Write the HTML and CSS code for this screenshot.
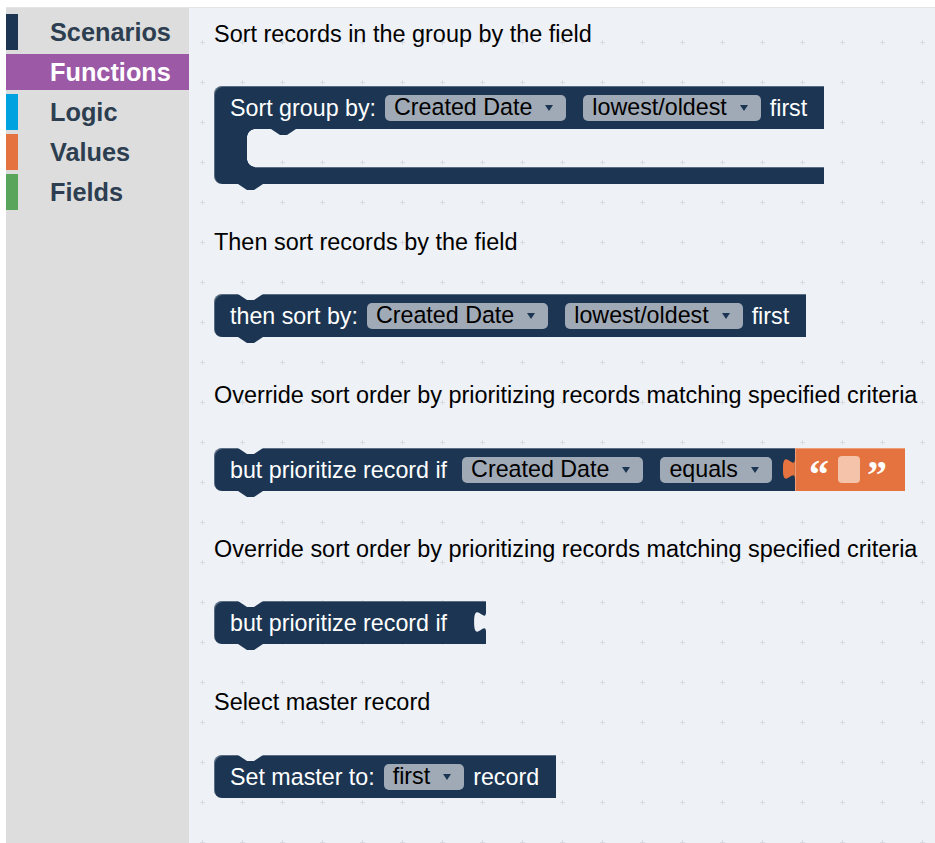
FILE: index.html
```html
<!DOCTYPE html>
<html lang="en">
<head>
<meta charset="utf-8">
<title>Blocks</title>
<link rel="stylesheet" href="styles.css">
</head>
<body>
<div class="app">
  <nav class="toolbox">
    <div class="cat"><span class="bar navy"></span><span class="name">Scenarios</span></div>
    <div class="cat selected"><span class="bar purple"></span><span class="name">Functions</span></div>
    <div class="cat"><span class="bar blue"></span><span class="name">Logic</span></div>
    <div class="cat"><span class="bar orange"></span><span class="name">Values</span></div>
    <div class="cat"><span class="bar green"></span><span class="name">Fields</span></div>
  </nav>
  <main class="ws">
    <svg class="grid" aria-hidden="true">
      <defs>
        <pattern id="dots" patternUnits="userSpaceOnUse" x="-7" y="14" width="40" height="40">
          <rect x="20" y="18" width="1" height="5" fill="#d7dce3"/>
          <rect x="18" y="20" width="5" height="1" fill="#d7dce3"/>
        </pattern>
      </defs>
      <rect width="100%" height="100%" fill="url(#dots)"/>
    </svg>
    <div class="flyout">
      <p class="label">Sort records in the group by the field</p>
      <div class="cblk">
        <div class="blk head">
          <span class="txt">Sort group by:</span>
          <span class="dd">Created Date<i class="arr"></i></span>
          <span class="dd">lowest/oldest<i class="arr"></i></span>
          <span class="txt">first</span>
          <span class="tab inner"></span>
        </div>
        <div class="cmid"><span class="arm"></span></div>
        <div class="cfoot"><span class="tab"></span></div>
      </div>

      <p class="label">Then sort records by the field</p>
      <div class="blk">
        <span class="notch"></span>
        <span class="txt">then sort by:</span>
        <span class="dd">Created Date<i class="arr"></i></span>
        <span class="dd">lowest/oldest<i class="arr"></i></span>
        <span class="txt">first</span>
        <span class="tab"></span>
      </div>

      <p class="label tall">Override sort order by prioritizing records matching specified criteria</p>
      <div class="row">
        <div class="blk withval">
          <span class="notch"></span>
          <span class="txt">but prioritize record if</span>
          <span class="dd wide">Created Date<i class="arr"></i></span>
          <span class="dd">equals<i class="arr"></i></span>
          <span class="tab"></span>
        </div>
        <div class="str">
          <span class="otab"></span>
          <span class="q">&#8220;</span>
          <span class="strbox"></span>
          <span class="q close">&#8221;</span>
        </div>
      </div>

      <p class="label">Override sort order by prioritizing records matching specified criteria</p>
      <div class="blk emptyval">
        <span class="notch"></span>
        <span class="txt">but prioritize record if</span>
        <span class="vcut"></span>
        <span class="tab"></span>
      </div>

      <p class="label tall">Select master record</p>
      <div class="blk">
        <span class="notch"></span>
        <span class="txt">Set master to:</span>
        <span class="dd">first<i class="arr"></i></span>
        <span class="txt">record</span>
      </div>
    </div>
  </main>
</div>
</body>
</html>
```

FILE: styles.css
```css
* { box-sizing: border-box; }

body {
  margin: 0;
  background: #ffffff;
  font-family: "Liberation Sans", Arial, sans-serif;
}

.app {
  display: flex;
  margin: 7px 0 0 6px;
  height: 836px;
  border-top: 1px solid #e3e5e8;
  overflow: hidden;
}

/* ---------- toolbox ---------- */
.toolbox {
  width: 183px;
  flex: none;
  background: #dddddd;
  padding-top: 6px;
  display: flex;
  flex-direction: column;
  gap: 4px;
}

.cat {
  display: flex;
  align-items: center;
  height: 36px;
}

.cat .bar {
  width: 12px;
  height: 100%;
}

.cat .name {
  margin-left: 32px;
  font-weight: bold;
  font-size: 25.3px;
  line-height: 36px;
  color: #2c3e50;
}

.cat.selected { background: #9b59a6; }
.cat.selected .name { color: #ffffff; }

.navy { background: #1b3552; }
.purple { background: #9b59a6; }
.blue { background: #00a2e0; }
.orange { background: #e4733f; }
.green { background: #59a55c; }

/* ---------- workspace ---------- */
.ws {
  flex: 1;
  position: relative;
  background: #eef1f6;
  overflow: hidden;
}

.grid {
  position: absolute;
  left: 0;
  top: 0;
  width: 100%;
  height: 100%;
}

.flyout {
  position: relative;
  padding: 14px 0 0 25px;
  font-size: 23.25px;
}

.label {
  margin: 0 0 40px;
  font-size: 23.45px;
  line-height: 24px;
  color: #000000;
  white-space: nowrap;
}

.label.tall { margin-bottom: 41px; }

/* ---------- blocks ---------- */
.blk {
  position: relative;
  display: flex;
  align-items: center;
  width: max-content;
  height: 43px;
  padding: 0 17px 0 16px;
  background: #1b3552;
  border-radius: 8px 0 0 8px;
  box-shadow: inset 1px 1px 0 rgba(255, 255, 255, 0.28);
  color: #ffffff;
  white-space: nowrap;
  margin-bottom: 46px;
}

.txt { line-height: 26px; }

.dd {
  display: flex;
  align-items: center;
  height: 26px;
  margin-left: 9px;
  padding: 0 13px 0 9px;
  background: #a0aab6;
  border-radius: 5px;
  color: #000000;
}

.dd + .dd { margin-left: 17px; }
.dd.wide { margin-left: 15px; }
.dd + .txt { margin-left: 9px; }

.arr {
  width: 0;
  height: 0;
  margin-left: 13px;
  border-left: 4px solid transparent;
  border-right: 4px solid transparent;
  border-top: 6px solid #1b3552;
}

.notch {
  position: absolute;
  top: 0;
  left: 24px;
  width: 25px;
  height: 6px;
  background: #eef1f6;
  clip-path: polygon(0 0, 100% 0, 64% 100%, 36% 100%);
}

.tab {
  position: absolute;
  bottom: -6px;
  left: 24px;
  width: 25px;
  height: 6px;
  background: #1b3552;
  clip-path: polygon(0 0, 100% 0, 64% 100%, 36% 100%);
}

/* C-shaped block */
.cblk {
  display: flex;
  flex-direction: column;
  width: max-content;
  margin-bottom: 46px;
}

.blk.head {
  margin-bottom: 0;
  border-radius: 8px 0 0 0;
}

.tab.inner { left: 57px; }

.cmid {
  display: flex;
  height: 38px;
}

.arm {
  position: relative;
  width: 33px;
  background: #1b3552;
  box-shadow: inset 1px 0 0 rgba(255, 255, 255, 0.28);
}

.arm::before,
.arm::after {
  content: "";
  position: absolute;
  left: 100%;
  width: 8px;
  height: 8px;
}

.arm::before {
  top: 0;
  background: radial-gradient(circle at 100% 100%, transparent 7.5px, #1b3552 8px);
}

.arm::after {
  bottom: 0;
  background: radial-gradient(circle at 100% 0, transparent 7.5px, #1b3552 8px);
}

.cfoot {
  position: relative;
  height: 17px;
  background: #1b3552;
  border-radius: 0 0 0 8px;
  box-shadow: inset 1px 0 0 rgba(255, 255, 255, 0.28);
}

.cfoot::before {
  content: "";
  position: absolute;
  left: 41px;
  right: 0;
  top: 0;
  height: 1px;
  background: rgba(255, 255, 255, 0.28);
}

/* block with value input */
.row {
  display: flex;
  width: max-content;
  margin-bottom: 46px;
}

.row > .blk { margin-bottom: 0; }

.blk.withval { padding-right: 23px; }

.str {
  position: relative;
  display: flex;
  align-items: center;
  height: 43px;
  padding: 0 20px 0 14px;
  background: #e4733f;
  box-shadow: inset 1px 1px 0 rgba(255, 255, 255, 0.3);
}

.otab {
  position: absolute;
  left: -12px;
  top: 10px;
  width: 12px;
  height: 22px;
  background: #e4733f;
  clip-path: path("M12 0 C12 14.7 0 -11.7 0 11 C0 33.7 12 7.3 12 22 Z");
}

.q {
  width: 18px;
  margin-top: 10px;
  text-align: center;
  font-family: "Liberation Serif", "Times New Roman", serif;
  font-weight: bold;
  font-size: 40px;
  line-height: 40px;
  color: #ffffff;
}

.q.close { margin-left: 7px; }

.strbox {
  width: 22px;
  height: 27px;
  margin-left: 11px;
  background: #f4c3a9;
  border-radius: 4px;
}

.blk.emptyval { padding-right: 39px; }

.vcut {
  position: absolute;
  right: 0;
  top: 10px;
  width: 12px;
  height: 22px;
  background: #eef1f6;
  clip-path: path("M12 0 C12 14.7 0 -11.7 0 11 C0 33.7 12 7.3 12 22 Z");
}
```
